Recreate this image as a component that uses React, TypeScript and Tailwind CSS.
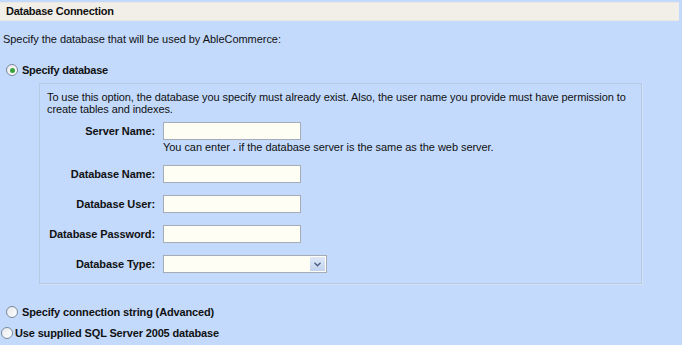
import React from 'react';

const fields = [
  { label: 'Server Name:', hint: true },
  { label: 'Database Name:' },
  { label: 'Database User:' },
  { label: 'Database Password:' },
];

function Radio({ checked }: { checked?: boolean }) {
  return (
    <span className="flex h-[12px] w-[12px] items-center justify-center rounded-full border border-[#7a8a9c] bg-gradient-to-br from-[#e6e8ec] to-[#ffffff]">
      {checked && <span className="h-[5px] w-[5px] rounded-full bg-[#3aa43a]" />}
    </span>
  );
}

export default function App() {
  return (
    <div className="h-[345px] w-[682px] overflow-hidden bg-[#c3dafd] font-['Liberation_Sans',Arial,sans-serif] text-[11px] text-[#111]">
      <div className="mr-[3px] mt-[2px] flex h-[19px] items-center border-y border-[#e9e8e4] bg-[#f2efe9] pl-[6px] font-bold tracking-[-0.25px]">
        Database Connection
      </div>

      <div className="mt-[11px] pl-[3px] leading-[14px] tracking-[-0.05px]">
        Specify the database that will be used by AbleCommerce:
      </div>

      <div className="mt-[17px] flex h-[14px] items-center gap-[4px] pl-[6px] font-bold tracking-[-0.25px]">
        <Radio checked />
        <span>Specify database</span>
      </div>

      <div className="ml-[39px] mt-[6px] w-[603px] border border-[#b6cae4] pb-[10px] pt-[7px] shadow-[1px_1px_0_#d3e1f5]">
        <div className="pl-[7px] leading-[12px] tracking-[-0.1px]">
          To use this option, the database you specify must already exist. Also, the user name you provide must have permission to create tables and indexes.
        </div>

        <div className="mt-[7px] flex flex-col gap-[12px]">
          {fields.map((f) => (
            <div key={f.label}>
              <div className="flex items-center">
                <label className="w-[115px] text-right font-bold tracking-[-0.1px]">{f.label}</label>
                <input
                  type="text"
                  className="ml-[8px] h-[18px] w-[138px] border border-[#a5acb5] bg-[#fffef5] outline-none"
                />
              </div>
              {f.hint && (
                <div className="ml-[123px] mt-[1px] leading-[12px] tracking-[-0.05px]">
                  You can enter <b>.</b> if the database server is the same as the web server.
                </div>
              )}
            </div>
          ))}

          <div className="flex items-center">
            <label className="w-[115px] text-right font-bold tracking-[-0.1px]">Database Type:</label>
            <div className="ml-[8px] flex h-[18px] w-[164px] border border-[#a5acb5] bg-[#fffef5]">
              <div className="flex-1" />
              <div className="m-[1px] flex w-[15px] items-center justify-center bg-gradient-to-b from-[#dfe8f7] to-[#c2d2ee]">
                <svg width="7" height="5" viewBox="0 0 7 5">
                  <path d="M0.5 0.8 L3.5 3.8 L6.5 0.8" fill="none" stroke="#4d6185" strokeWidth="1.4" />
                </svg>
              </div>
            </div>
          </div>
        </div>
      </div>

      <div className="mt-[21px] flex h-[14px] items-center gap-[4px] pl-[6px] font-bold tracking-[-0.15px]">
        <Radio />
        <span>Specify connection string (Advanced)</span>
      </div>

      <div className="mt-[7px] flex h-[14px] items-center gap-[2px] pl-[1px] font-bold tracking-[-0.15px]">
        <Radio />
        <span>Use supplied SQL Server 2005 database</span>
      </div>
    </div>
  );
}
